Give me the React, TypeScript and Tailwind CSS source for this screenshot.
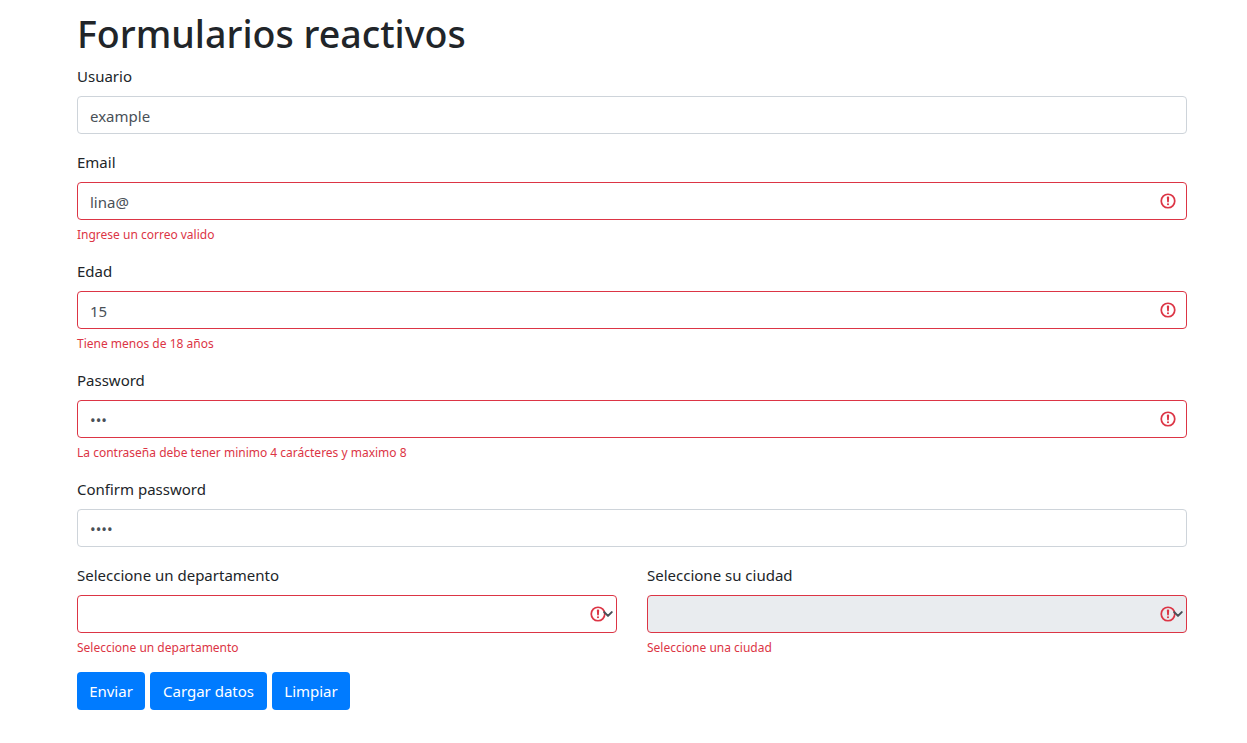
const font = "[font-family:'Noto_Sans',sans-serif]";

function InvalidIcon({ className }: { className: string }) {
  return (
    <svg className={className} width="18" height="18" viewBox="0 0 12 12" fill="none" stroke="#dc3545" strokeWidth="1.15">
      <circle cx="6" cy="6" r="4.5" />
      <path strokeLinejoin="round" d="M5.8 3.6h.4L6 6.5z" />
      <circle cx="6" cy="8.2" r=".7" fill="#dc3545" stroke="none" />
    </svg>
  );
}

function Chevron() {
  return (
    <svg className="absolute right-[4px] top-[15px]" width="10" height="8" viewBox="0 0 16 12" fill="none" stroke="#495057" strokeWidth="3.2" strokeLinecap="round" strokeLinejoin="round">
      <path d="M2 3l6 6 6-6" />
    </svg>
  );
}

function Field({ label, value, type = "text", error, mb = "mb-4" }: { label: string; value: string; type?: string; error?: string; mb?: string }) {
  return (
    <div className={mb}>
      <label className="block mb-2 h-6 leading-6 text-[#212529]">{label}</label>
      <div className="relative">
        <input
          readOnly
          type={type}
          value={value}
          className={`block w-full h-[38px] px-3 pt-[2px] rounded border bg-white text-[#495057] outline-none ${error ? "border-[#dc3545] pr-10" : "border-[#ced4da]"}`}
        />
        {error && <InvalidIcon className="absolute right-[10px] top-[10px]" />}
      </div>
      {error && <div className="mt-1 h-[19px] pt-px text-[12px] leading-[19.2px] text-[#dc3545]">{error}</div>}
    </div>
  );
}

function SelectField({ label, error, disabled }: { label: string; error: string; disabled?: boolean }) {
  return (
    <div>
      <label className="block mb-2 h-6 leading-6 text-[#212529]">{label}</label>
      <div className="relative">
        <div className={`h-[38px] rounded border border-[#dc3545] ${disabled ? "bg-[#e9ecef]" : "bg-white"}`} />
        <InvalidIcon className="absolute right-[10px] top-[10px]" />
        <Chevron />
      </div>
      <div className="mt-1 h-[19px] pt-px text-[12px] leading-[19.2px] text-[#dc3545]">{error}</div>
    </div>
  );
}

function Btn({ children, width }: { children: string; width: string }) {
  return (
    <button className={`h-[38px] rounded bg-[#007bff] text-white ${width}`}>{children}</button>
  );
}

export default function App() {
  return (
    <div className={`min-h-[743px] bg-white pt-2 pl-[77px] text-[15px] ${font}`}>
      <div className="w-[1110px]">
        <h1 className="mb-2 h-12 pt-[2px] text-[37.6px] leading-[48px] font-medium text-[#212529]">Formularios reactivos</h1>
        <Field label="Usuario" value="example" />
        <Field label="Email" value="lina@" error="Ingrese un correo valido" />
        <Field label="Edad" value="15" error="Tiene menos de 18 años" />
        <Field label="Password" value="abc" type="password" error="La contraseña debe tener minimo 4 carácteres y maximo 8" />
        <Field label="Confirm password" value="abcd" type="password" />
        <div className="grid grid-cols-2 gap-x-[30px] mb-4">
          <SelectField label="Seleccione un departamento" error="Seleccione un departamento" />
          <SelectField label="Seleccione su ciudad" error="Seleccione una ciudad" disabled />
        </div>
        <div className="flex gap-[5px]">
          <Btn width="w-[68px]">Enviar</Btn>
          <Btn width="w-[117px]">Cargar datos</Btn>
          <Btn width="w-[78px]">Limpiar</Btn>
        </div>
      </div>
    </div>
  );
}
